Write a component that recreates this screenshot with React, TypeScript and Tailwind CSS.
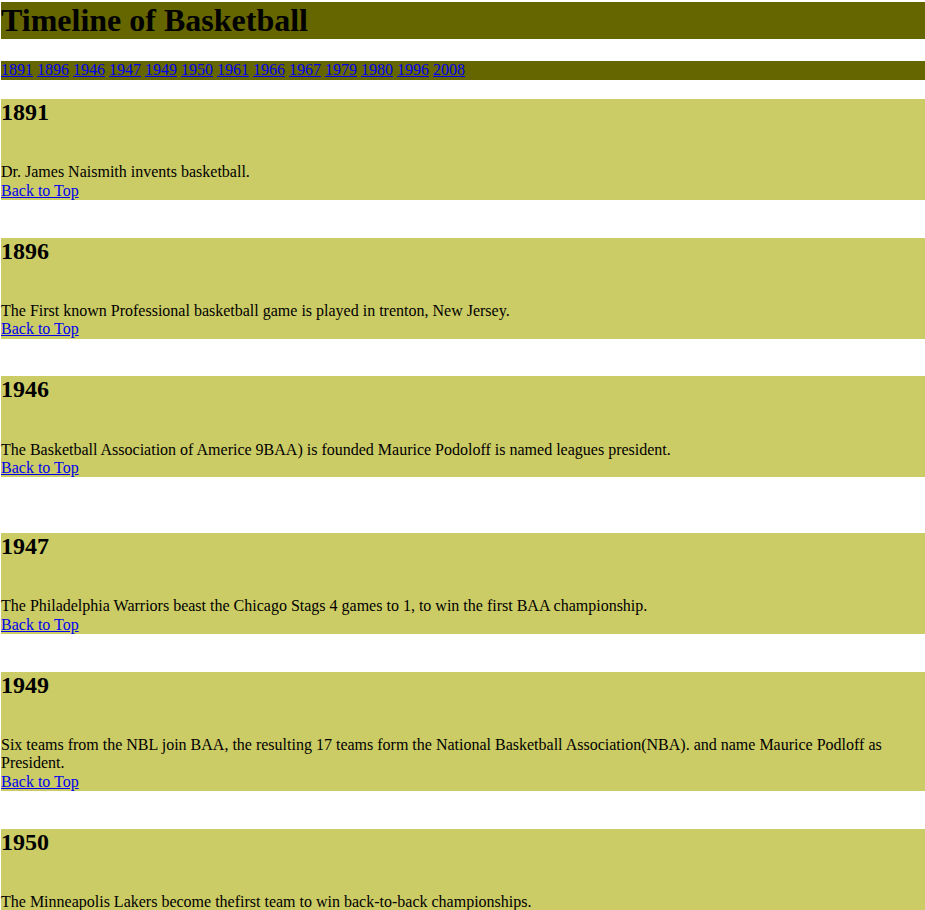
const years = ["1891", "1896", "1946", "1947", "1949", "1950", "1961", "1966", "1967", "1979", "1980", "1996", "2008"];

const events = [
  { year: "1891", text: "Dr. James Naismith invents basketball.", gap: "mt-[19.6px]" },
  { year: "1896", text: "The First known Professional basketball game is played in trenton, New Jersey.", gap: "mt-[37.6px]" },
  { year: "1946", text: "The Basketball Association of Americe 9BAA) is founded Maurice Podoloff is named leagues president.", gap: "mt-[37.6px]" },
  { year: "1947", text: "The Philadelphia Warriors beast the Chicago Stags 4 games to 1, to win the first BAA championship.", gap: "mt-[55.8px]" },
  { year: "1949", text: "Six teams from the NBL join BAA, the resulting 17 teams form the National Basketball Association(NBA). and name Maurice Podloff as President.", gap: "mt-[37.6px]" },
  { year: "1950", text: "The Minneapolis Lakers become thefirst team to win back-to-back championships.", gap: "mt-[37.6px]" },
  { year: "1961", text: "Wilt Chamberlain becomes the first player to score more than 3,000 points in a season.", gap: "mt-[37.6px]" },
  { year: "1966", text: "Red Auerbach retires as coach of the Boston Celtics.", gap: "mt-[37.6px]" },
];

export default function App() {
  return (
    <main className="bg-white min-h-screen pl-[1px] pt-[2px] pb-10 text-black font-['Liberation_Serif',serif]">
      <h1 id="top" className="bg-[#666600] text-[32px] leading-[36.8px] font-bold">Timeline of Basketball</h1>

      <nav className="mt-[22.4px] bg-[#666600] text-[16px] leading-[18.4px]">
        {years.map((y, idx) => (
          <span key={y}>
            <a href={"#y" + y} className="text-[#0000ee] underline">{y}</a>
            {idx < years.length - 1 ? " " : ""}
          </span>
        ))}
      </nav>

      {events.map((ev) => (
        <section key={ev.year} id={"y" + ev.year} className={ev.gap + " bg-[#cccc66] flex flex-col"}>
          <h2 className="text-[24px] leading-[27.6px] font-bold">{ev.year}</h2>
          <p className="mt-[36.6px] text-[16px] leading-[18.4px]">{ev.text}</p>
          <a href="#top" className="text-[16px] leading-[18.4px] text-[#0000ee] underline self-start">Back to Top</a>
        </section>
      ))}
    </main>
  );
}
